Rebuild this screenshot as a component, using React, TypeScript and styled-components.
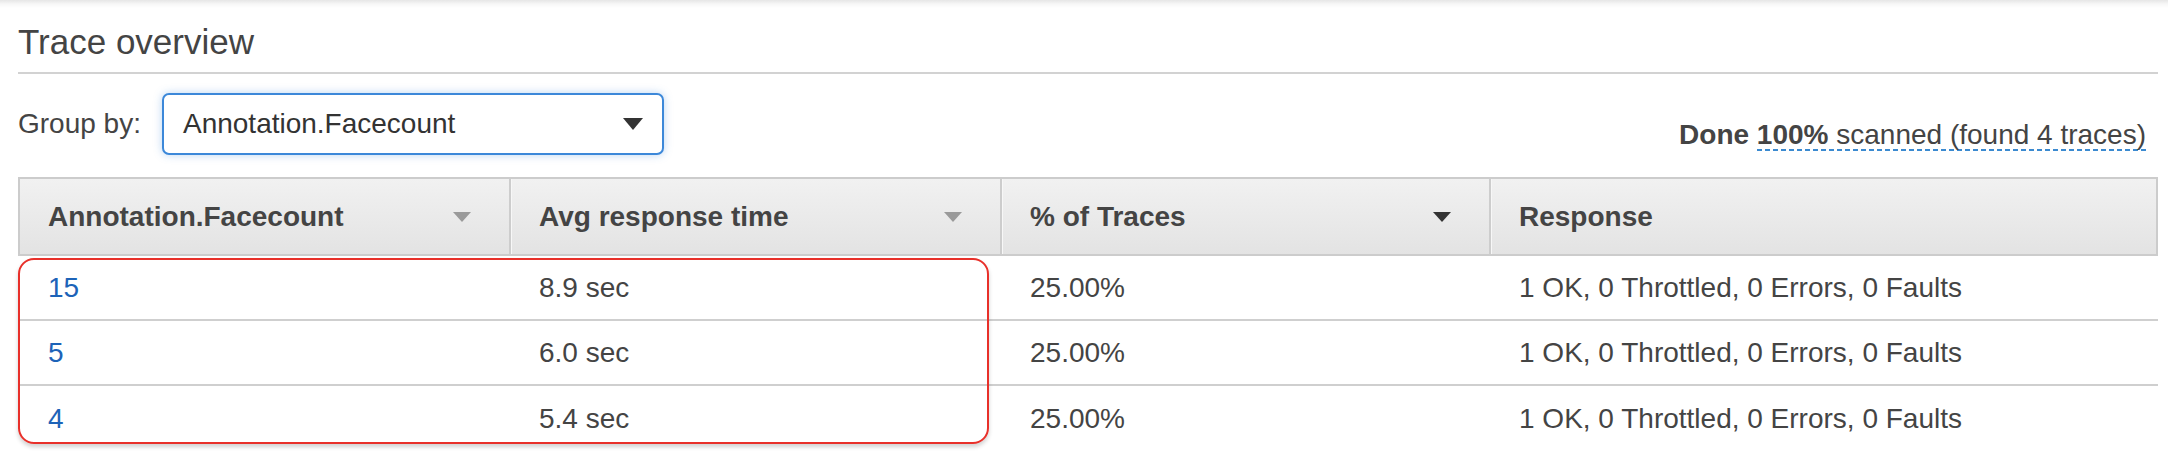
import styled, { createGlobalStyle } from 'styled-components';

const GlobalStyle = createGlobalStyle`
  html, body {
    margin: 0;
    padding: 0;
  }
  body {
    width: 2168px;
    height: 468px;
    overflow: hidden;
    background: linear-gradient(to bottom, #e6e6e6 0, #f7f7f7 4px, #ffffff 8px) no-repeat, #fff;
    font-family: 'Liberation Sans', Arial, sans-serif;
    color: #444;
  }
`;

const columns = '489px 491px 489px 1fr';

type Row = { group: string; avg: string; pct: string; response: string };

const rows: Row[] = [
  { group: '15', avg: '8.9 sec', pct: '25.00%', response: '1 OK, 0 Throttled, 0 Errors, 0 Faults' },
  { group: '5', avg: '6.0 sec', pct: '25.00%', response: '1 OK, 0 Throttled, 0 Errors, 0 Faults' },
  { group: '4', avg: '5.4 sec', pct: '25.00%', response: '1 OK, 0 Throttled, 0 Errors, 0 Faults' },
];

const Caret = ({ color, width, height }: { color: string; width: number; height: number }) => (
  <svg width={width} height={height} viewBox="0 0 20 12" preserveAspectRatio="none">
    <polygon points="0,0 20,0 10,12" fill={color} />
  </svg>
);

const App = () => {
  return (
    <Page>
      <GlobalStyle />
      <Title>Trace overview</Title>
      <Toolbar>
        <Label>Group by:</Label>
        <Select>
          <span>Annotation.Facecount</span>
          <Caret color="#333" width={20} height={12} />
        </Select>
        <Status>
          <b>Done</b>{' '}
          <Scanned>
            <b>100%</b> scanned (found 4 traces)
          </Scanned>
        </Status>
      </Toolbar>
      <Table>
        <HeaderRow>
          <HeaderCell>
            <span>Annotation.Facecount</span>
            <Caret color="#9a9a9a" width={18} height={10} />
          </HeaderCell>
          <HeaderCell $divider>
            <span>Avg response time</span>
            <Caret color="#9a9a9a" width={18} height={10} />
          </HeaderCell>
          <HeaderCell $divider>
            <span>% of Traces</span>
            <Caret color="#333" width={18} height={10} />
          </HeaderCell>
          <HeaderCell $divider>
            <span>Response</span>
          </HeaderCell>
        </HeaderRow>
        <Body>
          {rows.map((r, i) => (
            <DataRow key={i} $last={i === rows.length - 1}>
              <Cell>
                <Link href="#">{r.group}</Link>
              </Cell>
              <Cell $divider>{r.avg}</Cell>
              <Cell $divider>{r.pct}</Cell>
              <Cell $divider>{r.response}</Cell>
            </DataRow>
          ))}
          <Highlight />
        </Body>
      </Table>
    </Page>
  );
};

const Page = styled.div`
  padding: 22px 10px 0 18px;
  font-size: 28px;
`;

const Title = styled.h2`
  margin: 0;
  font-size: 35px;
  font-weight: normal;
  line-height: 40px;
  color: #444;
  padding-bottom: 10px;
  border-bottom: 2px solid #d2d2d2;
`;

const Toolbar = styled.div`
  display: flex;
  align-items: center;
  margin-top: 19px;
  height: 62px;
`;

const Label = styled.label`
  margin-right: 21px;
  line-height: 34px;
`;

const Select = styled.div`
  box-sizing: border-box;
  width: 502px;
  height: 62px;
  border: 2px solid #3c88d9;
  border-radius: 7px;
  box-shadow: 0 0 9px rgba(60, 136, 217, 0.35);
  display: flex;
  align-items: center;
  justify-content: space-between;
  padding: 0 19px 0 19px;
  color: #333;
  background: #fff;
`;

const Status = styled.div`
  margin-left: auto;
  margin-right: 12px;
  align-self: flex-end;
  margin-bottom: 3px;
  line-height: 34px;
  color: #444;
`;

const Scanned = styled.span`
  background: linear-gradient(to right, #3b8ad0 60%, transparent 60%) left bottom / 8px 2px repeat-x;
  padding-bottom: 1px;
`;

const Table = styled.div`
  margin-top: 22px;
`;

const HeaderRow = styled.div`
  display: grid;
  grid-template-columns: ${columns};
  height: 79px;
  box-sizing: border-box;
  border: 2px solid #cccccc;
  background: linear-gradient(to bottom, #f1f1f1, #e3e3e3);
`;

const HeaderCell = styled.div<{ $divider?: boolean }>`
  display: flex;
  align-items: center;
  justify-content: space-between;
  padding: 0 38px 0 28px;
  font-weight: bold;
  color: #444;
  border-left: ${(p) => (p.$divider ? '2px solid #cdcdcd' : 'none')};
  box-shadow: ${(p) => (p.$divider ? 'inset 1px 0 0 #f7f7f7' : 'none')};
`;

const Body = styled.div`
  position: relative;
`;

const DataRow = styled.div<{ $last?: boolean }>`
  display: grid;
  grid-template-columns: ${columns};
  padding: 0 2px;
  height: 65px;
  box-sizing: border-box;
  border-bottom: ${(p) => (p.$last ? 'none' : '2px solid #cfcfcf')};
`;

const Cell = styled.div<{ $divider?: boolean }>`
  display: flex;
  align-items: center;
  padding-left: 28px;
  border-left: ${(p) => (p.$divider ? '2px solid transparent' : 'none')};
  color: #444;
  white-space: nowrap;
`;

const Link = styled.a`
  color: #1d63b8;
  text-decoration: none;
`;

const Highlight = styled.div`
  position: absolute;
  left: 0;
  top: 2px;
  width: 971px;
  height: 186px;
  box-sizing: border-box;
  border: 2px solid #e8302a;
  border-radius: 16px;
  box-shadow: 0 3px 4px rgba(0, 0, 0, 0.18);
  pointer-events: none;
`;

export default App;
